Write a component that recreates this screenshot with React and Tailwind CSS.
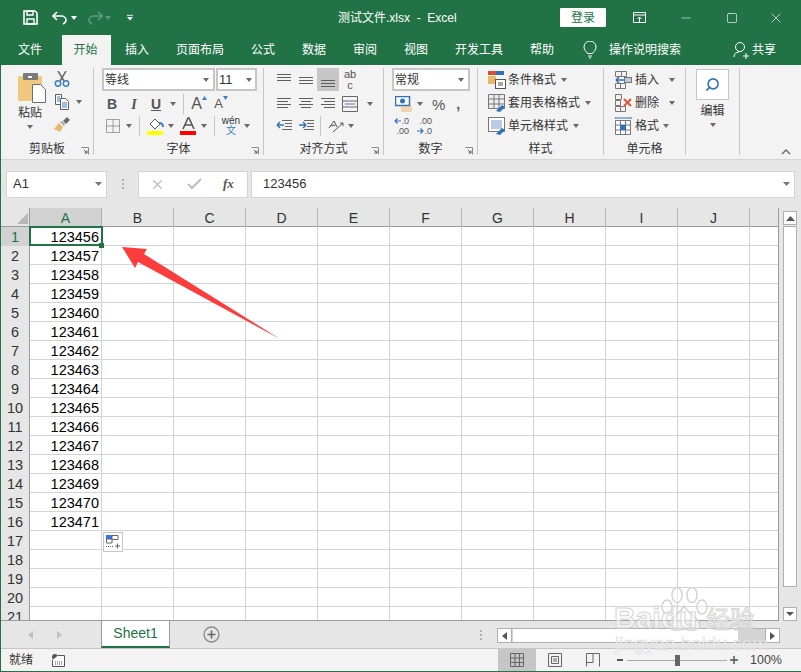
import { Minus, Square, X, Search } from "lucide-react";

const cols = ["A", "B", "C", "D", "E", "F", "G", "H", "I", "J"];
const rows = Array.from({ length: 21 }, (_, i) => i + 1);
const tabs = ["文件", "开始", "插入", "页面布局", "公式", "数据", "审阅", "视图", "开发工具", "帮助"];
const tabW = ["w-[61px] pr-[3px]", "w-[49px] pr-[2px]", "w-[52px]", "w-[74px]", "w-[52px]", "w-[50px]", "w-[52px]", "w-[50px]", "w-[76px]", "w-[50px]"];

const Caret = ({ color = "#6a6a6a", className = "", width = 6 }) => (
  <svg width={width} height="4" viewBox="0 0 7 4" preserveAspectRatio="none" className={`shrink-0 ${className}`}>
    <path d="M0 0h7L3.5 4z" fill={color} />
  </svg>
);

const Sep = ({ className = "" }) => <div className={`w-px h-[20px] bg-[#c6c6c6] shrink-0 ${className}`} />;

const Launcher = () => (
  <svg width="8" height="8" viewBox="0 0 8 8" className="absolute right-[4px] bottom-0">
    <path d="M.5.5h7v7" fill="none" stroke="#8a8a8a" />
    <path d="M3 3l3 3M3.5 6h2.5V3.5" fill="none" stroke="#555" />
  </svg>
);

const Group = ({ label, width, launcher, children }) => (
  <div className={`relative flex flex-col h-full border-r border-[#c6c6c6] ${width}`}>
    <div className="flex-1 min-h-0">{children}</div>
    <div className="h-[17px] text-center text-[12px] leading-[22px] text-[#333]">{label}</div>
    {launcher && <Launcher />}
  </div>
);

const Lines = ({ ys, align = "left" }) => (
  <svg width="16" height="16" viewBox="0 0 16 16">
    {ys.map((y, i) => {
      const short = i % 2 === 1 && align !== "full";
      const x1 = short && align === "center" ? 3 : short && align === "right" ? 4 : 1;
      const x2 = short && align === "center" ? 13 : short && align === "left" ? 12 : 15;
      return <path key={y} d={`M${x1} ${y + 0.5}H${x2}`} stroke="#5f5f5f" />;
    })}
  </svg>
);

const Cells = ({ children }) => (
  <svg width="18" height="18" viewBox="0 0 18 18" className="shrink-0">
    {children}
  </svg>
);

const StyleRow = ({ children, label, caretClass = "ml-[5px]" }) => (
  <div className="flex items-center h-[23px] text-[12px] text-[#333]">
    <span className="w-[18px] h-[18px] mr-[2px]">{children}</span>
    {label}
    <Caret className={caretClass} />
  </div>
);

const Ribbon = () => (
  <div className="flex h-[94px] bg-[#f3f3f3] pt-[3px] pb-[4px] text-[#333]">
    <Group label="剪贴板" width="w-[93px]" launcher>
      <div className="flex pl-[17px]">
        <div className="flex flex-col items-center w-[24px] pt-[5px]">
          <svg width="28" height="30" viewBox="0 0 28 30" className="shrink-0 self-start">
            <rect x="0" y="3" width="24" height="25" rx="1" fill="#f0c97f" />
            <rect x="5" y="0" width="15" height="7" rx="1" fill="#7a7a7a" />
            <rect x="10" y="3" width="4" height="2" fill="#f3f3f3" />
            <path d="M14.500 11.500h8l5 5v13h-13z" fill="#fff" stroke="#6d6d6d" />
          </svg>
          <span className="text-[12px] leading-[18px] mt-[1px]">粘贴</span>
          <Caret className="mt-[3px]" />
        </div>
        <div className="flex flex-col pl-[12px] pt-[3px] gap-[7px]">
          <svg width="16" height="16" viewBox="0 0 16 16">
            <path d="M4 0l6 10M12 0L6 10" stroke="#6a6a6a" strokeWidth="1.5" />
            <circle cx="4" cy="12.500" r="2.700" fill="none" stroke="#3f7fbf" strokeWidth="1.500" />
            <circle cx="12" cy="12.500" r="2.700" fill="none" stroke="#3f7fbf" strokeWidth="1.500" />
          </svg>
          <div className="flex items-center gap-[6px]">
            <svg width="16" height="16" viewBox="0 0 16 16">
              <path d="M1.500 .5h6v10h-6z" fill="#fff" stroke="#5f5f5f" />
              <path d="M6.500 4.500h5l3 3v8h-8z" fill="#fff" stroke="#5f5f5f" />
              <path d="M8 9h5M8 11h5M8 13h5" stroke="#3f7fbf" />
              <path d="M3 3h3M3 5h3M3 7h3" stroke="#3f7fbf" />
            </svg>
            <Caret />
          </div>
          <svg width="16" height="15" viewBox="0 0 16 15">
            <path d="M0 12l5-6 4 4-3 5z" fill="#e8b96c" />
            <path d="M6 5l2-1 3 3-1 2z" fill="#aaa" />
            <path d="M9 4l4-4 3 3-4 4z" fill="#6a6a6a" />
          </svg>
        </div>
      </div>
    </Group>

    <Group label="字体" width="w-[170px]" launcher>
      <div className="pl-[8px]">
        <div className="flex h-[23px]">
          <div className="flex items-center justify-between w-[113px] bg-white border-2 border-[#c6c6c6] pl-[1px] pr-[4px] text-[12px]">
            等线 <Caret />
          </div>
          <div className="flex items-center justify-between w-[41px] ml-px bg-white border-2 border-[#c6c6c6] pl-[1px] pr-[3px] text-[13px]">
            11 <Caret />
          </div>
        </div>
        <div className="flex items-center h-[22px] mt-[2px] -ml-px text-[14px] text-[#555]">
          <b className="w-[22px] text-center">B</b>
          <i className="w-[22px] text-center font-['Liberation_Serif'] font-bold">I</i>
          <u className="w-[22px] text-center font-bold">U</u>
          <Caret className="ml-[3px]" />
          <Sep className="ml-[7px]" />
          <span className="flex items-start justify-center w-[22px] ml-[4px] text-[16px] leading-[20px]">
            A<Caret color="#3f7fbf" width={5} className="mt-[2px] rotate-180" />
          </span>
          <span className="flex items-start justify-center w-[22px] text-[13px] leading-[20px]">
            A<Caret color="#3f7fbf" width={5} className="mt-[2px]" />
          </span>
        </div>
        <div className="flex items-center h-[22px] pl-[4px]">
          <svg width="14" height="14" viewBox="0 0 14 14" className="shrink-0">
            <path d="M.5.5h13v13H.5zM7 .5v13M.5 7h13" fill="none" stroke="#555" strokeDasharray="1 1" />
          </svg>
          <Caret className="ml-[6px]" />
          <Sep className="ml-[7px]" />
          <svg width="17" height="18" viewBox="0 0 17 18" className="ml-[7px] shrink-0">
            <path d="M3 7l5-5 5 5-5 5z" fill="#fff" stroke="#555" />
            <path d="M12 6c2 0 4 1 4 4" stroke="#3f7fbf" strokeWidth="2" fill="none" />
            <rect y="14" width="16" height="4" fill="#ffff00" />
          </svg>
          <Caret className="ml-[4px]" />
          <svg width="17" height="18" viewBox="0 0 17 18" className="ml-[6px] shrink-0">
            <path d="M3 12L8 1h1l5 11M5 8h7" stroke="#555" strokeWidth="1.600" fill="none" />
            <rect y="14" width="16" height="4" fill="#ff0000" />
          </svg>
          <Caret className="ml-[4px]" />
          <Sep className="ml-[7px]" />
          <div className="flex flex-col items-center w-[22px] ml-[5px] leading-[10px] text-[10px]">
            <span>wén</span>
            <span className="text-[#3f7fbf]">文</span>
          </div>
          <Caret className="ml-[2px]" />
        </div>
      </div>
    </Group>

    <Group label="对齐方式" width="w-[120px]" launcher>
      <div className="pl-[9px]">
        <div className="flex items-center h-[23px]">
          <span className="flex justify-center w-[22px]"><Lines ys={[2, 5, 8]} align="full" /></span>
          <span className="flex justify-center w-[22px]"><Lines ys={[5, 8, 11]} align="full" /></span>
          <span className="flex justify-center w-[22px] h-[23px] items-center bg-[#c6c6c6]"><Lines ys={[8, 11, 14]} align="full" /></span>
          <span className="flex flex-col items-center w-[22px] text-[11px] leading-[11px] text-[#555]">
            <span>ab</span>
            <span>c</span>
          </span>
        </div>
        <div className="flex items-center h-[22px] mt-[2px]">
          <span className="flex justify-center w-[22px]"><Lines ys={[2, 5, 8, 11]} align="left" /></span>
          <span className="flex justify-center w-[22px]"><Lines ys={[2, 5, 8, 11]} align="center" /></span>
          <span className="flex justify-center w-[22px]"><Lines ys={[2, 5, 8, 11]} align="right" /></span>
          <span className="flex justify-center w-[22px]">
            <svg width="16" height="16" viewBox="0 0 16 16">
              <path d="M.5.5h15v15H.5zM.5 5h15M.5 11h15" fill="none" stroke="#666" />
              <path d="M3 8h10" stroke="#3f7fbf" />
            </svg>
          </span>
          <Caret className="ml-[6px]" />
        </div>
        <div className="flex items-center h-[22px]">
          <span className="flex justify-center w-[22px]">
            <svg width="16" height="14" viewBox="0 0 16 14">
              <path d="M6 1.500h10M9 4.500h7M9 7.500h7M6 10.500h10" stroke="#666" />
              <path d="M1 6h7M1 6l3-3M1 6l3 3" stroke="#2f72b8" strokeWidth="1.400" fill="none" />
            </svg>
          </span>
          <span className="flex justify-center w-[22px]">
            <svg width="16" height="14" viewBox="0 0 16 14">
              <path d="M6 1.500h10M9 4.500h7M9 7.500h7M6 10.500h10" stroke="#666" />
              <path d="M1 6h7M8 6L5 3M8 6L5 9" stroke="#2f72b8" strokeWidth="1.400" fill="none" />
            </svg>
          </span>
          <Sep className="ml-[3px]" />
          <svg width="18" height="16" viewBox="0 0 18 16" className="ml-[6px] shrink-0">
            <path d="M2 10l5-7 3 6M3.500 8l5-1" stroke="#555" fill="none" />
            <path d="M6 14L16 5M16 5h-3M16 5v3" stroke="#555" fill="none" />
          </svg>
          <Caret className="ml-[3px]" />
        </div>
      </div>
    </Group>

    <Group label="数字" width="w-[94px]" launcher>
      <div className="pl-[8px]">
        <div className="flex items-center justify-between w-[78px] h-[23px] bg-white border-2 border-[#c6c6c6] pl-[1px] pr-[4px] text-[12px]">
          常规 <Caret />
        </div>
        <div className="flex items-center h-[22px] mt-[2px] pl-[3px]">
          <svg width="17" height="16" viewBox="0 0 17 16" className="shrink-0">
            <rect x=".5" y=".5" width="14" height="9" fill="#fff" stroke="#2f72b8" strokeWidth="1.500" />
            <circle cx="7.500" cy="5" r="2.500" fill="#2f72b8" />
            <path d="M6 11h11M6 13h11M6 15h11" stroke="#e8b96c" />
          </svg>
          <Caret className="ml-[5px]" />
          <span className="ml-[9px] text-[15px] text-[#555] leading-none">%</span>
          <span className="ml-[11px] text-[14px] font-bold text-[#555] leading-none">,</span>
        </div>
        <div className="flex items-center h-[22px] pl-[3px] text-[9px] leading-[10px] text-[#555]">
          <div className="flex flex-col items-end w-[14px]">
            <span className="flex items-center">
              <svg width="7" height="6" viewBox="0 0 7 6"><path d="M7 3H1M3.500 .5L1 3l2.500 2.500" fill="none" stroke="#2f72b8" strokeWidth="1.200" /></svg>
              .0
            </span>
            <span>.00</span>
          </div>
          <div className="flex flex-col items-end w-[14px] ml-[9px]">
            <span>.00</span>
            <span className="flex items-center">
              <svg width="7" height="6" viewBox="0 0 7 6"><path d="M0 3h6M3.500 .5L6 3 3.500 5.500" fill="none" stroke="#2f72b8" strokeWidth="1.200" /></svg>
              .0
            </span>
          </div>
        </div>
      </div>
    </Group>

    <Group label="样式" width="w-[126px]">
      <div className="pl-[10px]">
        <StyleRow label="条件格式">
          <Cells>
            <rect x="0" y="0" width="8" height="4" fill="#d9502e" />
            <rect x="8" y="0" width="8" height="4" fill="#2f72b8" />
            <rect x="0" y="5" width="8" height="8" fill="#e8b96c" />
            <rect x="7.500" y="8.500" width="10" height="9" fill="#fff" stroke="#555" />
            <path d="M10 12h5M10 14h5" stroke="#555" />
          </Cells>
        </StyleRow>
        <StyleRow label="套用表格格式">
          <Cells>
            <path d="M.5.5h16v14H.5zM.5 5h16M.5 10h16M6 .5v14M11 .5v14" fill="#eee" stroke="#777" />
            <path d="M8 17l6-6 3 2-5 5z" fill="#2f72b8" />
          </Cells>
        </StyleRow>
        <StyleRow label="单元格样式">
          <Cells>
            <rect x=".5" y=".5" width="16" height="14" fill="#fff" stroke="#777" />
            <rect x="3" y="3" width="11" height="9" fill="#b8cce4" />
            <path d="M8 17l6-6 3 2-5 5z" fill="#2f72b8" />
          </Cells>
        </StyleRow>
      </div>
    </Group>

    <Group label="单元格" width="w-[82px]">
      <div className="pl-[11px]">
        <StyleRow label="插入" caretClass="ml-[10px]">
          <Cells>
            <path d="M.5.5h6v5h-6zM6.500 .5h5v5h-5zM.5 12.500h5v5h-5zM5.500 12.500h5v5h-5z" fill="#f3f3f3" stroke="#777" />
            <rect x="9.500" y="6.500" width="7" height="5" fill="#b8cce4" stroke="#777" />
            <path d="M1 9h8M1 9l3-3M1 9l3 3" stroke="#2f72b8" strokeWidth="1.500" fill="none" />
          </Cells>
        </StyleRow>
        <StyleRow label="删除" caretClass="ml-[10px]">
          <Cells>
            <path d="M.5.5h6v5h-6zM.5 12.500h5v5h-5zM5.500 12.500h5v5h-5zM.5 6.500h5v5h-5z" fill="#f3f3f3" stroke="#777" />
            <path d="M9 5l7 7M16 5l-7 7" stroke="#e0563a" strokeWidth="2" />
          </Cells>
        </StyleRow>
        <StyleRow label="格式" caretClass="ml-[4px]">
          <Cells>
            <path d="M.5 3.500h15v14H.5zM.5 8h15M.5 13h15M5.500 3.500v14M10.500 3.500v14" fill="#fff" stroke="#777" />
            <rect x="5" y="8" width="6" height="5" fill="#2f72b8" />
            <path d="M0 1h16M0 0v2M16 0v2" stroke="#2f72b8" />
          </Cells>
        </StyleRow>
      </div>
    </Group>

    <Group label="" width="w-[54px]">
      <div className="flex flex-col items-center">
        <div className="flex items-center justify-center w-[33px] h-[31px] mt-px bg-white border border-[#c6c6c6]">
          <Search size={15} color="#2f72b8" strokeWidth={2.500} className="-scale-x-100" />
        </div>
        <span className="text-[12px] leading-[18px] mt-[2px]">编辑</span>
        <Caret className="mt-[3px]" />
      </div>
    </Group>
    <div className="flex-1 flex items-end justify-end pr-[10px]">
      <svg width="10" height="6" viewBox="0 0 10 6"><path d="M1 5l4-4 4 4" fill="none" stroke="#666" strokeWidth="1.400" /></svg>
    </div>
  </div>
);

const Sheet = () => (
  <div className="relative flex-1 min-h-0 flex overflow-hidden bg-white">
    <div className="flex-1 min-w-0 overflow-hidden border-b border-[#9b9b9b]">
      <div className="flex h-[19px] bg-[#e6e6e6]">
        <div className="relative w-[29px] shrink-0 border-r border-[#9b9b9b] border-b">
          <div className="absolute right-[1px] bottom-[2px] w-0 h-0 border-l-[11px] border-l-transparent border-b-[11px] border-b-[#b7b7b7]" />
        </div>
        {cols.map((c, i) => (
          <div
            key={c}
            className={`w-[72px] shrink-0 text-center text-[14px] leading-[20px] border-r border-b ${
              i === 0 ? "bg-[#d2d2d2] text-[#217346] border-[#b0b0b0] border-b-[#217346]" : "border-[#b8b8b8] border-b-[#9b9b9b] text-[#333]"
            }`}
          >
            {c}
          </div>
        ))}
        <div className="flex-1 border-b border-[#9b9b9b]" />
      </div>
      {rows.map((r) => (
        <div key={r} className="flex h-[19px]">
          <div
            className={`w-[29px] shrink-0 text-center text-[14.5px] leading-[19px] border-r border-[#9b9b9b] ${
              r === 1 ? "bg-[#d2d2d2] text-[#217346]" : "bg-[#e6e6e6] text-[#333]"
            }`}
          >
            <span className="relative top-px">{r}</span>
          </div>
          {cols.map((c, i) => (
            <div
              key={c}
              className="w-[72px] shrink-0 pr-[2px] text-right text-[14.5px] leading-[18px] text-black border-r border-b border-[#d4d4d4]"
            >
              <span className="relative top-px">{i === 0 && r <= 16 ? 123455 + r : ""}</span>
            </div>
          ))}
          <div className="flex-1 border-b border-[#d4d4d4]" />
        </div>
      ))}
    </div>

    <div className="flex flex-col w-[23px] shrink-0 bg-[#e6e6e6] border-l border-[#9b9b9b] px-[4px] pt-[3px]">
      <div className="flex items-center justify-center h-[14px] bg-white border border-[#b0b0b0]">
        <svg width="9" height="5" viewBox="0 0 9 5"><path d="M0 5h9L4.500 0z" fill="#555" /></svg>
      </div>
      <div className="h-[361px] mt-px bg-white border border-[#b0b0b0]" />
      <div className="flex-1" />
      <div className="flex items-center justify-center h-[14px] bg-white border border-[#b0b0b0]">
        <Caret color="#555" width={8} />
      </div>
    </div>

    {/* selected cell */}
    <div className="absolute left-[28px] top-[18px] w-[74px] h-[20px] border-2 border-[#217346]" />
    <div className="absolute left-[98px] top-[35px] w-[5px] h-[5px] bg-[#217346]" />

    {/* paste options */}
    <div className="absolute left-[102px] top-[324px] flex items-center justify-center w-[20px] h-[20px] bg-white border border-[#c6c6c6]">
      <svg width="16" height="16" viewBox="0 0 16 16">
        <rect x="1" y="1" width="6" height="4" fill="#2f72ff" />
        <path d="M7 1.500h6v4H7zM1.500 5h5.500v4H1.500z" fill="#fff" stroke="#666" />
        <path d="M1 12.500h7" stroke="#666" strokeDasharray="1 1" />
        <path d="M10 12h5M12.500 9.500v5" stroke="#666" />
      </svg>
    </div>

    {/* red arrow */}
    <svg width="170" height="110" viewBox="0 0 170 110" className="absolute left-[115px] top-[30px]">
      <path d="M6 9L31 11 28 16 164 101 22 24 19 30z" fill="#fb3d3d" />
    </svg>
  </div>
);

const Watermark = () => (
  <div className="absolute left-[612px] top-[586px] w-[190px] h-[68px] pointer-events-none">
    <svg width="48" height="46" viewBox="0 0 48 46" className="absolute left-[49px] top-0">
      <g fill="#ffffff" fillOpacity="0.45" stroke="#d4d4d4" strokeWidth="1.500">
        <ellipse cx="16" cy="9" rx="5" ry="7.500" />
        <ellipse cx="31" cy="9" rx="5" ry="7.500" />
        <ellipse cx="41" cy="21" rx="5" ry="7" />
        <ellipse cx="6" cy="21" rx="5" ry="7" />
        <path d="M8 40c0-8 9-10 15-20 6 10 16 12 16 20-2 5-9 5-16 3-7 2-13 2-15-3z" />
      </g>
    </svg>
    <div className="absolute left-[2px] top-[17px] text-[30px] font-bold leading-[30px] text-white/50 [-webkit-text-stroke:1px_#d4d4d4]">Baidu</div>
    <div className="absolute left-[94px] top-[17px] text-[24px] leading-[30px] font-['Noto_Sans_CJK_SC'] text-white/50 [-webkit-text-stroke:1px_#d4d4d4]">经验</div>
    <div className="absolute left-[3px] top-[48px] text-[19px] leading-[20px] text-white/60 [-webkit-text-stroke:0.5px_#d4d4d4]">jingyan.baidu.com</div>
  </div>
);

const App = () => (
  <div className="relative flex flex-col w-[801px] h-[672px] overflow-hidden bg-[#217346] pl-px pb-px font-['Liberation_Sans','Noto_Sans_CJK_SC',sans-serif]">
    {/* title bar */}
    <div className="flex items-center h-[35px] text-white">
      <div className="flex items-center w-[337px] pl-[22px]">
        <svg width="15" height="15" viewBox="0 0 15 15">
          <path d="M1 1h11l2 2v11H1z" fill="none" stroke="#fff" strokeWidth="1.600" />
          <path d="M4 1h6v4H4zM4 9h7v5H4z" fill="none" stroke="#fff" strokeWidth="1.400" />
        </svg>
        <svg width="16" height="14" viewBox="0 0 16 14" className="ml-[14px]">
          <path d="M5 1L1 5l4 4M1 5h8c3 0 5 2 5 4s-1 3-3 4" fill="none" stroke="#fff" strokeWidth="1.600" />
        </svg>
        <Caret color="#fff" className="ml-[3px]" />
        <svg width="16" height="14" viewBox="0 0 16 14" className="ml-[10px]">
          <path d="M11 1l4 4-4 4M15 5H7C4 5 2 7 2 9s1 3 3 4" fill="none" stroke="#5c9a7c" strokeWidth="1.600" />
        </svg>
        <Caret color="#5c9a7c" className="ml-[2px]" />
        <svg width="6" height="7" viewBox="0 0 7 7" className="ml-[16px]">
          <path d="M0 1h7" stroke="#fff" />
          <path d="M0 3h7L3.500 7z" fill="#fff" />
        </svg>
      </div>
      <div className="w-[222px] text-[12px]">测试文件.xlsx&nbsp; -&nbsp; Excel</div>
      <div className="flex items-center justify-center w-[46px] h-[19px] bg-white text-[#217346] text-[12px] rounded-[1px]">登录</div>
      <div className="flex flex-1 items-center h-full">
        <svg width="13" height="11" viewBox="0 0 13 11" className="ml-[27px]">
          <path d="M.5.5h12v10H.5zM.5 3h12M6.500 10V5M4.500 7l2-2 2 2" fill="none" stroke="#fff" />
        </svg>
        <Minus size={14} color="#fff" strokeWidth={1} className="ml-[33px]" />
        <Square size={12} color="#fff" strokeWidth={1.300} className="ml-[33px]" />
        <X size={16} color="#fff" strokeWidth={1} className="ml-[30px]" />
      </div>
    </div>

    {/* tabs */}
    <div className="flex items-stretch h-[30px] text-[12px] text-white">
      {tabs.map((t, i) => (
        <div
          key={t}
          className={`flex items-center justify-center ${tabW[i]} ${i === 1 ? "bg-[#f3f3f3] text-[#217346]" : ""}`}
        >
          {t}
        </div>
      ))}
      <div className="flex items-center ml-[16px]">
        <svg width="14" height="18" viewBox="0 0 14 18" className="shrink-0">
          <path d="M4.500 12.500C3 10 1 9 1 6a6 6 0 0 1 12 0c0 3-2 4-3.500 6.500zM5 15h4M6 17h2" fill="none" stroke="#fff" />
        </svg>
        <span className="ml-[12px] w-[124px]">操作说明搜索</span>
        <svg width="16" height="18" viewBox="0 0 16 18" className="shrink-0">
          <circle cx="7" cy="6" r="4.500" fill="none" stroke="#fff" />
          <path d="M1 16c0-3 2-5 5-5M10 15h6M13 12v6" fill="none" stroke="#fff" />
        </svg>
        <span className="ml-[3px]">共享</span>
      </div>
    </div>

    <Ribbon />

    {/* formula bar */}
    <div className="flex items-center h-[49px] bg-[#e6e6e6] pl-[5px] pr-[6px] border-t border-[#d4d4d4]">
      <div className="flex items-center justify-between w-[101px] h-[27px] bg-white border border-[#d4d4d4] pl-[6px] pr-[4px] text-[13px] text-[#333]">
        A1 <Caret width={7} color="#777" />
      </div>
      <div className="flex flex-col gap-[2px] w-[2px] ml-[15px] mr-[14px]">
        <span className="h-[2px] bg-[#b0b0b0]" />
        <span className="h-[2px] bg-[#b0b0b0]" />
        <span className="h-[2px] bg-[#b0b0b0]" />
      </div>
      <div className="flex items-center w-[110px] h-[27px] bg-white border border-[#d4d4d4] pl-[11px]">
        <X size={15} color="#bdbdbd" strokeWidth={2} />
        <svg width="15" height="12" viewBox="0 0 15 12" className="ml-[22px]">
          <path d="M1 6l4 4 9-9" fill="none" stroke="#bdbdbd" strokeWidth="2" />
        </svg>
        <i className="ml-[21px] text-[13px] font-bold font-['Liberation_Serif'] text-[#555]">fx</i>
      </div>
      <div className="flex flex-1 items-center justify-between h-[27px] ml-[3px] bg-white border border-[#d4d4d4] pl-[11px] pr-[4px] text-[13px] text-[#333]">
        123456 <Caret width={7} color="#777" />
      </div>
    </div>

    <Sheet />

    {/* sheet tabs */}
    <div className="flex h-[28px] shrink-0 bg-[#e6e6e6] border-b border-[#c6c6c6]">
      <div className="flex items-center w-[100px] pl-[27px] gap-[24px]">
        <svg width="5" height="8" viewBox="0 0 5 8"><path d="M5 0v8L0 4z" fill="#c0c0c0" /></svg>
        <svg width="5" height="8" viewBox="0 0 5 8"><path d="M0 0v8l5-4z" fill="#c0c0c0" /></svg>
      </div>
      <div className="flex items-center justify-center w-[69px] -mt-px bg-white border-x border-[#9b9b9b] border-b-2 border-b-[#217346] text-[14px] text-[#217346]">
        Sheet1
      </div>
      <svg width="17" height="17" viewBox="0 0 17 17" className="ml-[33px] mt-[5px]">
        <circle cx="8.500" cy="8.500" r="7.500" fill="none" stroke="#8a8a8a" strokeWidth="1.300" />
        <path d="M4.500 8.500h8M8.500 4.500v8" stroke="#666" strokeWidth="1.600" />
      </svg>
      <div className="flex flex-col gap-[2px] ml-[260px] mt-[9px]">
        <span className="w-[2px] h-[2px] bg-[#b0b0b0]" />
        <span className="w-[2px] h-[2px] bg-[#b0b0b0]" />
        <span className="w-[2px] h-[2px] bg-[#b0b0b0]" />
      </div>
      <div className="flex items-center w-[283px] h-[15px] ml-[15px] mt-[7px] bg-[#d4d4d4] border border-[#b0b0b0]">
        <div className="flex items-center justify-center w-[14px] h-full bg-white border-r border-[#b0b0b0]">
          <svg width="5" height="8" viewBox="0 0 5 8"><path d="M5 0v8L0 4z" fill="#555" /></svg>
        </div>
        <div className="w-[225px] h-full ml-px bg-white" />
        <div className="flex-1" />
        <div className="flex items-center justify-center w-[14px] h-full bg-white border-l border-[#b0b0b0]">
          <svg width="5" height="8" viewBox="0 0 5 8"><path d="M0 0v8l5-4z" fill="#555" /></svg>
        </div>
      </div>
    </div>

    {/* status bar */}
    <div className="flex items-center h-[22px] shrink-0 bg-[#f3f3f3] text-[#333]">
      <span className="ml-[8px] w-[43px] text-[12px]">就绪</span>
      <svg width="13" height="13" viewBox="0 0 13 13">
        <circle cx="3" cy="3" r="3" fill="#555" />
        <path d="M6 1.500h6.500V12.500H.5V6" fill="#fff" stroke="#555" />
        <path d="M3 8h8M3 10h8" stroke="#555" strokeDasharray="1 1" />
      </svg>
      <div className="flex items-center justify-center w-[38px] h-full ml-[433px] bg-[#c6c6c6]">
        <svg width="14" height="14" viewBox="0 0 14 14">
          <path d="M.5.500h13v13H.5zM.5 5h13M.5 9.500h13M5 .5v13M9.500 .5v13" fill="none" stroke="#666" />
        </svg>
      </div>
      <div className="flex items-center justify-center w-[38px] h-full">
        <svg width="14" height="14" viewBox="0 0 14 14">
          <path d="M.5.500h13v13H.5z" fill="none" stroke="#666" />
          <path d="M3.500 3.500h7v7h-7zM5 6h4M5 8h4" fill="none" stroke="#666" />
        </svg>
      </div>
      <div className="flex items-center justify-center w-[38px] h-full">
        <svg width="14" height="14" viewBox="0 0 14 14">
          <path d="M.5 13.500V.5h13v13M.5 9.500h6.500V.5" fill="none" stroke="#666" />
        </svg>
      </div>
      <span className="ml-[5px] w-[6px] h-[2px] bg-[#555]" />
      <div className="relative w-[100px] h-px ml-[4px] bg-[#aaa]">
        <span className="absolute left-[48px] -top-[5px] w-[5px] h-[11px] bg-[#666]" />
      </div>
      <svg width="8" height="8" viewBox="0 0 8 8" className="ml-[3px]">
        <path d="M0 4h8M4 0v8" stroke="#555" strokeWidth="1.500" />
      </svg>
      <span className="ml-[12px] text-[12.500px] text-[#444]">100%</span>
    </div>

    <Watermark />
  </div>
);

export default App;
